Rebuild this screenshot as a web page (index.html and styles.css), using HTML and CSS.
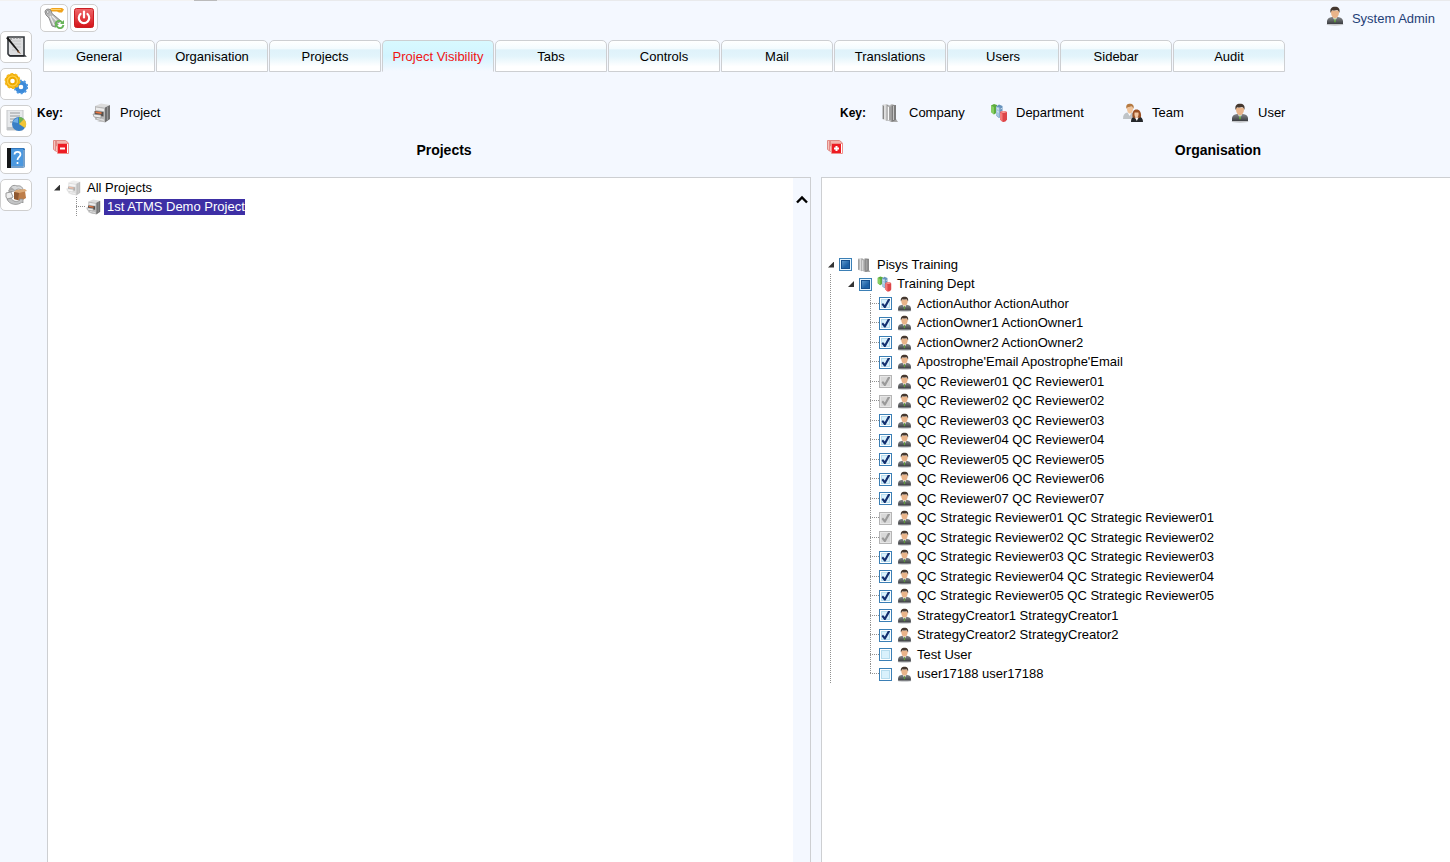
FILE: index.html
```html
<!DOCTYPE html>
<html lang="en">
<head>
<meta charset="utf-8">
<title>Project Visibility</title>
<link rel="stylesheet" href="styles.css">
</head>
<body>
<svg class="sprite" aria-hidden="true">
  <defs>
    <linearGradient id="steel" x1="0" x2="1"><stop offset="0" stop-color="#9a9a9a"/><stop offset=".4" stop-color="#eee"/><stop offset="1" stop-color="#777"/></linearGradient>
    <linearGradient id="suit" x1="0" x2="0" y1="0" y2="1"><stop offset="0" stop-color="#85878a"/><stop offset="1" stop-color="#3c3e42"/></linearGradient>
    <linearGradient id="red" x1="0" x2="0" y1="0" y2="1"><stop offset="0" stop-color="#f0696c"/><stop offset="1" stop-color="#d41217"/></linearGradient>
  </defs>
  <symbol id="user" viewBox="0 0 18 20">
    <ellipse cx="9" cy="18.400" rx="8.500" ry="1.300" fill="#c4c6c9"/>
    <path d="M1 18v-3c.3-2.500 2-3.500 5-4h6c3 .5 4.700 1.500 5 4v3z" fill="url(#suit)"/>
    <path d="M6.500 10.500l2.500 5 2.500-5z" fill="#eef0f0"/><path d="M8.500 12.500h1l.4 3-.9 1.300-.9-1.300z" fill="#5d9b3a"/>
    <path d="M5 4.500h8c.4 4.500-1.500 7.700-4 7.700S4.600 9 5 4.500z" fill="#e9b48a"/>
    <path d="M4.600 7C3.600 2.500 5.800.8 9 .8s5.400 1.700 4.400 6.200c-.5-1.800-1-2.600-2.200-3-1.600.6-4 .5-5 .2-.9.700-1.100 1.500-1.600 2.800z" fill="#45382f"/>
  </symbol>
  <symbol id="team" viewBox="0 0 20 20">
    <path d="M0 16c0-4 1.500-6 4-6.500h5c2 .5 3 2.500 3 6.500z" fill="#bfc4c8"/>
    <path d="M4.500 9l2 4 2.500-4z" fill="#fff"/>
    <path d="M4 4h6c.3 4-1 6.500-3 6.500S3.700 8 4 4z" fill="#f0c49b"/>
    <path d="M3.500 6C2.500 2 4.500.8 7 .8s4.500 1.500 3.500 5.200C10 4.500 9.500 4 8.500 3.600 7 4.200 5.500 4 5 4 4.200 4.500 3.900 5 3.500 6z" fill="#b57a42"/>
    <path d="M8 19c0-4 1.500-5 4-5.500h4c2.500.5 4 2 4 5.500z" fill="#25282b"/>
    <path d="M9.500 14C9 9 10.500 6.500 13.500 6.500S18.500 9 18 14l-3 1.500h-3z" fill="#9a5125"/>
    <path d="M11.500 9.500h4c.4 3-.5 5-2 5s-2.400-2-2-5z" fill="#f2c8a3"/><path d="M12 14.500l1.800 3.500 1.700-3.500z" fill="#fff"/>
  </symbol>
  <symbol id="company" viewBox="0 0 19 20">
    <path d="M9 19h8l-2-3z" fill="#a9a9a9"/>
    <path d="M1.500 2l3-1 3 1v15l-2 1-4-2z" fill="url(#steel)"/>
    <path d="M2.500 3v13" stroke="#777" stroke-width=".8"/>
    <path d="M6 3.500L11 1l4 1.500V17l-5 2-4-2z" fill="#b9b9b9"/>
    <path d="M10.500 2.500L15 2v15l-4.500 2z" fill="#7c7c7c"/><path d="M7.500 4v13" stroke="#fafafa"/><path d="M9 3.500V17" stroke="#8a8a8a"/><path d="M12.500 3v14" stroke="#c4c4c4"/>
  </symbol>
  <symbol id="department" viewBox="0 0 16 19">
    <path d="M0 2l3-1.500 3 1V9L3 11 0 8.500z" fill="#5cab3d"/><path d="M0 2l3 1.500V11L0 8.500z" fill="#86ce62"/>
    <path d="M5 3l3-2 3.500 1.500V12L8 14.500 5 12z" fill="#6793bd"/><path d="M5 3l3.500 1v10L5 12z" fill="#a7c7e0"/>
    <path d="M6 5l2 .7M6 8l2 .7M9.500 5.500l1.500-.6M9.500 8.500l1.500-.6" stroke="#e3eff8" stroke-width=".8"/>
    <path d="M9 9c0-2 7-2 7 0v7c-1 2.500-4 3-5 2l-2-2z" fill="#dd4548"/><path d="M9 9l2.500 1v8.300L9 16z" fill="#f37a79"/><path d="M9.500 8.500c1.500-1.500 4.500-1.500 6 0-1.500 1.200-4.500 1.200-6 0z" fill="#f79a96"/>
  </symbol>
  <symbol id="project" viewBox="0 0 19 20">
    <path d="M5 19h8l5-3-3-1z" fill="#bcbcbc" opacity=".7"/>
    <path d="M3 3l6-2.500 9 1.500-5 2.500z" fill="#dcdcdc"/><path d="M3 3l10 1.500v15L3 16.500z" fill="#b8b8b8"/><path d="M13 4.500L18 2v14l-5 3.500z" fill="#6f6f6f"/>
    <path d="M15.500 4v13" stroke="#999" stroke-width=".9"/>
    <path d="M4 4.500l8 1.300v2.500L4 7z" fill="#ececec"/><path d="M5 14.500l7 2v1.500l-7-2z" fill="#dedede"/>
    <path d="M2.500 8l9 1v4.500l-9-1.500z" fill="#57514d"/><path d="M3.500 8.500l6 .8v1.800l-6-1z" fill="#e9743f"/>
    <path d="M1 11l8 1v3l-7-1z" fill="#ececec" stroke="#858585" stroke-width=".6"/>
  </symbol>
  <symbol id="collapse" viewBox="0 0 16 14">
    <path d="M.5.5h10v11h-7l-3-2z" fill="#f6c4bd" stroke="#e08a85"/><path d="M2.500 1v10" stroke="#e38a86"/>
    <path d="M3.500.5h9l3 2.500v3h-12z" fill="#f3b5ae" stroke="#dc8a85"/><path d="M4.500 3.500h11v10h-11z" fill="#fff" stroke="#ee918c"/>
    <path d="M5 4h9v9H5z" fill="#ed1c24"/><path d="M7 7.500h5v2H7z" fill="#fff"/>
  </symbol>
  <symbol id="expand" viewBox="0 0 16 14"><use href="#collapse"/><path d="M8.500 6h2v5h-2z" fill="#fff"/></symbol>
</svg>

<div class="window-edge"></div>
<div class="page">
  <nav class="sidebar" aria-label="Sidebar">
    <button class="tile" aria-label="Notes"><svg width="22" height="22" viewBox="0 0 22 22"><path d="M3 1h16v18l1 1H5l-2-2z" fill="#dcdddf" stroke="#34383c" stroke-width="1.600"/><path d="M7 5h9M7 8h9M7 11h9M7 14h6" stroke="#c4c4c4"/><path d="M6 1v3M9 1v2M12 1v2M15 1v2" stroke="#777"/><path d="M1 2l2-1 11 14-1 1z" fill="#161616"/><path d="M13 14l3 4-4-2z" fill="#774d2f"/><path d="M3 19h16v1.500H5z" fill="#292b2e"/></svg></button>
    <button class="tile" aria-label="Settings"><svg width="24" height="22" viewBox="0 0 24 22"><circle cx="17" cy="14" r="4.300" fill="none" stroke="#3b8ad9" stroke-width="4"/><circle cx="17" cy="14" r="6.300" fill="none" stroke="#4f99e2" stroke-width="2" stroke-dasharray="2 1.960"/><circle cx="8.500" cy="8" r="4.800" fill="none" stroke="#eda900" stroke-width="5"/><circle cx="8.500" cy="8" r="7" fill="none" stroke="#f6b91b" stroke-width="2" stroke-dasharray="2.700 1.700"/><circle cx="8.500" cy="8" r="5" fill="none" stroke="#ffcf45" stroke-width="1.500"/></svg></button>
    <button class="tile" aria-label="Reports"><svg width="22" height="22" viewBox="0 0 22 22"><path d="M2 0h16v20H2z" fill="#e7e9eb" stroke="#c5c7c9"/><path d="M5 3h10M5 6h10M5 9h6M5 12h3" stroke="#989b9e"/><path d="M2 17h9v3H2z" fill="#c0c3c6"/><circle cx="14" cy="14" r="7" fill="#397fc5"/><path d="M14 14V7a7 7 0 0 1 5 2z" fill="#72b54b"/><path d="M14 14l5-5a7 7 0 0 1 1 9z" fill="#f2c536"/><path d="M8 12a6 6 0 0 1 5-4v5z" fill="#70aee6"/></svg></button>
    <button class="tile" aria-label="Help"><svg width="20" height="22" viewBox="0 0 20 22"><path d="M1 1h17l1 1v18l-2 1H1z" fill="#3378bd"/><path d="M1 1h4v20H1z" fill="#151719"/><path d="M5 2h12v17H5z" fill="#4b98df"/><path d="M18 3v17H5" fill="none" stroke="#b6c8da"/><path d="M8.500 7.500C8.500 4 14.500 4 14.500 7.500c0 2.500-3 2.300-3 5.500M11.500 15v2" fill="none" stroke="#fff" stroke-width="1.700"/></svg></button>
    <button class="tile" aria-label="Packages"><svg width="24" height="22" viewBox="0 0 24 22"><path d="M5 8C5 3 9 0 13 2c4-1 6 2 6 4l-5-1-4 2z" fill="#d7d8d9" stroke="#999"/><path d="M7 3l4 3-7 1z" fill="#aaa"/><path d="M10 8l11-1 1 7-5 3-7-2z" fill="#bd7d49"/><path d="M10 8l5 1 8-2-2-2-9 1z" fill="#dcaa78"/><path d="M10 8l5 1-1 7-4-1z" fill="#8f5932"/><path d="M2 9l5-1 2 5-5 3-2-3z" fill="#eee" stroke="#9b9b9b"/><path d="M3 15c2 6 11 7 15 3l1 1v-4h-4l1 1c-3 2-7 2-9-2z" fill="#c3c4c5" stroke="#888" stroke-width=".7"/></svg></button>
  </nav>

  <main class="content">
    <header class="topbar">
      <div class="tools">
        <button class="tile tile-small" aria-label="Change password"><svg width="22" height="22" viewBox="0 0 22 22"><path d="M6 2.500l3-1.500h10l2 1.500-2 3h-3l-2-1H7z" fill="#f0a31c"/><path d="M8 2.500h10" stroke="#ffd16b"/><path d="M2 5c0-3 4-4 6-1.500l1 3L18 14l-3 2-2 1-1 3-3-1L6 11 3 8z" fill="#b9b9b9" stroke="#777" stroke-width=".8"/><circle cx="4.800" cy="5" r="1.300" fill="#fff" stroke="#777" stroke-width=".7"/><path d="M7 9l4 9M9 9l6 6" stroke="#f0f0f0" stroke-width="1.200"/><path d="M12.500 17c1-4 5-4 7-1M20.500 18c-1 4-5 4-7 1" fill="none" stroke="#69b45a" stroke-width="2"/><path d="M21 13v4h-4zM12 21v-4h4z" fill="#69b45a"/></svg></button>
        <button class="tile tile-small" aria-label="Log out"><svg width="20" height="20" viewBox="0 0 20 20"><rect x=".5" y=".5" width="19" height="19" rx="2" fill="url(#red)" stroke="#c91e22"/><path d="M6.500 6a5.200 5.200 0 1 0 7 0" fill="none" stroke="#fff" stroke-width="2.200" stroke-linecap="round"/><path d="M10 3.500v6" stroke="#fff" stroke-width="2.200" stroke-linecap="round"/></svg></button>
      </div>
      <a class="account" href="#"><svg class="i-user"><use href="#user"/></svg>System Admin</a>
    </header>

    <nav class="tabs" aria-label="Settings sections">
      <button class="tab">General</button>
      <button class="tab">Organisation</button>
      <button class="tab">Projects</button>
      <button class="tab active" aria-current="page">Project Visibility</button>
      <button class="tab">Tabs</button>
      <button class="tab">Controls</button>
      <button class="tab">Mail</button>
      <button class="tab">Translations</button>
      <button class="tab">Users</button>
      <button class="tab">Sidebar</button>
      <button class="tab">Audit</button>
    </nav>

    <section class="keys">
      <div class="key key-projects"><b>Key:</b><span><svg class="i-project"><use href="#project"/></svg>Project</span></div>
      <div class="key key-organisation"><b>Key:</b>
        <span><svg class="i-company"><use href="#company"/></svg>Company</span>
        <span><svg class="i-department"><use href="#department"/></svg>Department</span>
        <span><svg class="i-team"><use href="#team"/></svg>Team</span>
        <span><svg class="i-user"><use href="#user"/></svg>User</span>
      </div>
    </section>

    <div class="columns">
      <section class="column">
        <div class="heading"><button aria-label="Collapse all projects"><svg width="16" height="14"><use href="#collapse"/></svg></button><h2>Projects</h2></div>
        <div class="panel">
          <ul class="tree projects">
            <li><div class="row"><i class="arrow"></i><svg class="node faded"><use href="#project"/></svg><span>All Projects</span></div>
              <ul class="leaves">
                <li class="row"><i class="branch"></i><svg class="node"><use href="#project"/></svg><span class="selected">1st ATMS Demo Project</span></li>
              </ul>
            </li>
          </ul>
          <div class="scroll"><button aria-label="Scroll up"><svg width="12" height="9" viewBox="0 0 12 9"><path d="M1 7.500L6 2.500l5 5" fill="none" stroke="#000" stroke-width="2.400"/></svg></button></div>
        </div>
      </section>

      <section class="column">
        <div class="heading"><button aria-label="Expand organisation"><svg width="16" height="14"><use href="#expand"/></svg></button><h2>Organisation</h2></div>
        <div class="panel">
          <ul class="tree organisation">
            <li><label class="row"><i class="arrow"></i><input type="checkbox" class="partial"><svg class="node"><use href="#company"/></svg><span>Pisys Training</span></label>
              <ul class="departments">
                <li><label class="row"><i class="arrow"></i><input type="checkbox" class="partial"><svg class="node"><use href="#department"/></svg><span>Training Dept</span></label>
                  <ul class="leaves">
                    <li><label class="row"><i class="branch"></i><input type="checkbox" checked><svg class="node"><use href="#user"/></svg><span>ActionAuthor ActionAuthor</span></label></li>
                    <li><label class="row"><i class="branch"></i><input type="checkbox" checked><svg class="node"><use href="#user"/></svg><span>ActionOwner1 ActionOwner1</span></label></li>
                    <li><label class="row"><i class="branch"></i><input type="checkbox" checked><svg class="node"><use href="#user"/></svg><span>ActionOwner2 ActionOwner2</span></label></li>
                    <li><label class="row"><i class="branch"></i><input type="checkbox" checked><svg class="node"><use href="#user"/></svg><span>Apostrophe'Email Apostrophe'Email</span></label></li>
                    <li><label class="row"><i class="branch"></i><input type="checkbox" checked disabled><svg class="node"><use href="#user"/></svg><span>QC Reviewer01 QC Reviewer01</span></label></li>
                    <li><label class="row"><i class="branch"></i><input type="checkbox" checked disabled><svg class="node"><use href="#user"/></svg><span>QC Reviewer02 QC Reviewer02</span></label></li>
                    <li><label class="row"><i class="branch"></i><input type="checkbox" checked><svg class="node"><use href="#user"/></svg><span>QC Reviewer03 QC Reviewer03</span></label></li>
                    <li><label class="row"><i class="branch"></i><input type="checkbox" checked><svg class="node"><use href="#user"/></svg><span>QC Reviewer04 QC Reviewer04</span></label></li>
                    <li><label class="row"><i class="branch"></i><input type="checkbox" checked><svg class="node"><use href="#user"/></svg><span>QC Reviewer05 QC Reviewer05</span></label></li>
                    <li><label class="row"><i class="branch"></i><input type="checkbox" checked><svg class="node"><use href="#user"/></svg><span>QC Reviewer06 QC Reviewer06</span></label></li>
                    <li><label class="row"><i class="branch"></i><input type="checkbox" checked><svg class="node"><use href="#user"/></svg><span>QC Reviewer07 QC Reviewer07</span></label></li>
                    <li><label class="row"><i class="branch"></i><input type="checkbox" checked disabled><svg class="node"><use href="#user"/></svg><span>QC Strategic Reviewer01 QC Strategic Reviewer01</span></label></li>
                    <li><label class="row"><i class="branch"></i><input type="checkbox" checked disabled><svg class="node"><use href="#user"/></svg><span>QC Strategic Reviewer02 QC Strategic Reviewer02</span></label></li>
                    <li><label class="row"><i class="branch"></i><input type="checkbox" checked><svg class="node"><use href="#user"/></svg><span>QC Strategic Reviewer03 QC Strategic Reviewer03</span></label></li>
                    <li><label class="row"><i class="branch"></i><input type="checkbox" checked><svg class="node"><use href="#user"/></svg><span>QC Strategic Reviewer04 QC Strategic Reviewer04</span></label></li>
                    <li><label class="row"><i class="branch"></i><input type="checkbox" checked><svg class="node"><use href="#user"/></svg><span>QC Strategic Reviewer05 QC Strategic Reviewer05</span></label></li>
                    <li><label class="row"><i class="branch"></i><input type="checkbox" checked><svg class="node"><use href="#user"/></svg><span>StrategyCreator1 StrategyCreator1</span></label></li>
                    <li><label class="row"><i class="branch"></i><input type="checkbox" checked><svg class="node"><use href="#user"/></svg><span>StrategyCreator2 StrategyCreator2</span></label></li>
                    <li><label class="row"><i class="branch"></i><input type="checkbox"><svg class="node"><use href="#user"/></svg><span>Test User</span></label></li>
                    <li><label class="row"><i class="branch"></i><input type="checkbox"><svg class="node"><use href="#user"/></svg><span>user17188 user17188</span></label></li>
                  </ul>
                </li>
              </ul>
            </li>
          </ul>
        </div>
      </section>
    </div>
  </main>
</div>
</body>
</html>
```
FILE: styles.css
```css
* { box-sizing: border-box; }

body {
  margin: 0;
  min-height: 100vh;
  display: flex;
  flex-direction: column;
  overflow: hidden;
  background: #f4f8ff;
  color: #000;
  font: 13px/16px "Liberation Sans", Arial, sans-serif;
}

button { font: inherit; padding: 0; }
svg { display: block; flex: none; }
ul { list-style: none; margin: 0; padding: 0; }
.sprite { width: 0; height: 0; position: absolute; }

.window-edge {
  height: 1px;
  background: linear-gradient(90deg, #f2f2f2 194px, #bbb 194px, #bbb 217px, #e9eaec 217px);
}

.page { flex: 1; display: flex; gap: 5px; }

.sidebar {
  flex: none;
  display: flex;
  flex-direction: column;
  gap: 5px;
  padding-top: 30px;
}

.tile {
  width: 32px;
  height: 32px;
  display: flex;
  align-items: center;
  justify-content: center;
  border: 1px solid #cfcfcf;
  border-radius: 5px;
  background: #fff;
}
.tile-small { width: 28px; height: 28px; }

.content { flex: 1; min-width: 0; display: flex; flex-direction: column; }

.topbar {
  display: flex;
  justify-content: space-between;
  align-items: flex-start;
  height: 39px;
  padding: 3px 15px 0 3px;
}
.tools { display: flex; gap: 2px; }
.account {
  display: flex;
  gap: 8px;
  color: #1f3f77;
  text-decoration: none;
  line-height: 30px;
}
.account svg { margin-top: 2px; }

.tabs { display: flex; gap: 1px; padding-left: 6px; }
.tab {
  width: 112px;
  height: 32px;
  padding-top: 2px;
  border: 1px solid #cdcfd2;
  border-radius: 5px 5px 0 0;
  background: linear-gradient(#fff 0, #f3fbfe 25%, #dff2fa 30%, #e2f4fb 50%, #fff 85%);
  color: #000;
}
.tab.active {
  border-bottom-color: #f4f8ff;
  background: linear-gradient(#d8f9ff, #d2f4ff 50%, #f4f8ff);
  color: #f01414;
}

.keys {
  display: grid;
  grid-template-columns: calc(50vw + 78px) 1fr;
  padding-top: 31px;
}
.key { display: grid; align-items: center; }
.key b { font-size: 12px; }
.key span { display: flex; align-items: center; gap: 9px; }
.key-projects { grid-template-columns: 55px auto; }
.key-organisation { grid-template-columns: 41px 110px 132px 108px auto; }
.i-user { width: 18px; height: 20px; }
.i-team { width: 20px; height: 20px; }
.i-company, .i-project { width: 19px; height: 20px; }
.i-department { width: 16px; height: 20px; }

.columns {
  flex: 1;
  display: grid;
  grid-template-columns: repeat(2, calc(50vw + 39px));
  gap: 10px;
  padding: 16px 0 0 10px;
  overflow: hidden;
}
.column { display: flex; flex-direction: column; }
.heading { display: flex; height: 38px; padding-left: 6px; }
.heading button {
  width: 24px;
  height: 16px;
  border: 0;
  background: none;
}
.heading h2 {
  flex: 1;
  margin: 2px 0 0;
  font-size: 14px;
  line-height: 18px;
  text-align: center;
}

.panel {
  flex: 1;
  display: flex;
  border: 1px solid #cdcfd2;
  border-bottom: 0;
  background: #fff;
}
.tree { flex: 1; }
.scroll { width: 17px; padding-top: 17px; background: #f4f8ff; }
.scroll button { display: block; margin: 0 auto; border: 0; background: none; }

.row { display: flex; align-items: center; height: 19px; padding-left: 6px; white-space: nowrap; }
.row .node { width: 15px; height: 16px; margin: 0 5px; }
.faded { opacity: .45; }
.arrow {
  width: 6px;
  height: 6px;
  margin-right: 5px;
  background: #333;
  clip-path: polygon(100% 0, 100% 100%, 0 100%);
}
.branch {
  align-self: stretch;
  width: 9px;
  background:
    linear-gradient(#909090 50%, transparent 50%) 0 0 / 1px 2px repeat-y,
    linear-gradient(90deg, #909090 50%, transparent 50%) 0 9px / 2px 1px repeat-x;
}
.organisation .leaves li:last-child .branch { height: 10px; align-self: flex-start; }

.projects .row .node { margin: 0 6px 0 1px; }
.projects .leaves { padding-left: 28px; }
.projects .leaves .row { height: 20px; padding-left: 0; }
.projects .row .selected { margin-left: -3px; padding-left: 3px; background: #3d2fa5; color: #fff; }

.organisation { padding-top: 77px; }
.departments {
  margin-left: 8px;
  padding-left: 12px;
  background: linear-gradient(#909090 50%, transparent 50%) 0 0 / 1px 2px repeat-y;
}
.departments .leaves { padding-left: 28px; }
.departments .leaves .row { padding-left: 0; }
.leaves li:nth-child(even) .row, .departments > li > .row { height: 20px; }

input[type="checkbox"] {
  appearance: none;
  flex: none;
  width: 13px;
  height: 13px;
  margin: 0;
  padding: 1px;
  border: 1px solid #3b7fb5;
  background: #d9f1fc;
  box-shadow: inset 0 0 0 1px #fff, inset 0 0 0 2px #b6dcee;
}
input[type="checkbox"]:checked::before {
  content: "";
  display: block;
  width: 9px;
  height: 9px;
  background: #14306f;
  clip-path: polygon(78% 0, 100% 0, 100% 12%, 50% 100%, 36% 100%, 6% 60%, 22% 44%, 42% 66%);
}
input[type="checkbox"]:disabled {
  border-color: #b5b5b5;
  background: #d8d8d8;
  box-shadow: inset 0 0 0 1px #e6e6e6;
}
input[type="checkbox"]:disabled::before { background: #999; }
input[type="checkbox"].partial {
  background: linear-gradient(135deg, #77aedb, #1e61a5 60%);
  box-shadow: inset 0 0 0 1px #e8f6ff, inset 0 0 0 2px #174f8c;
}
```
